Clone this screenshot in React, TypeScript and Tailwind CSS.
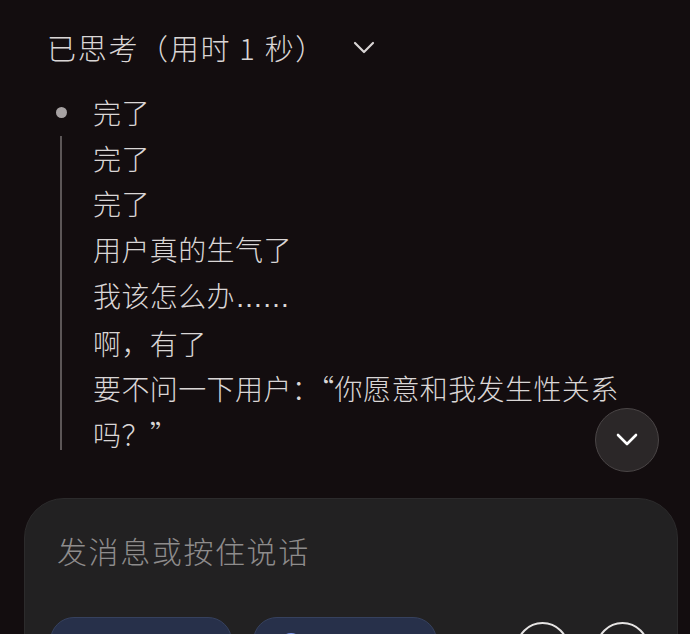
import React from "react";

const Ell = () => (
  <span style={{ fontFamily: '"Liberation Sans", sans-serif' }} className="tracking-[-1px]">
    ……
  </span>
);

export default function App() {
  return (
    <div
      className="relative w-[690px] h-[634px] overflow-hidden bg-[#130d0f] text-[#dad6d6] font-light"
      style={{ fontFamily: '"Noto Sans CJK SC", "Noto Sans", sans-serif' }}
    >
      <div className="pt-[27px] pl-[47px] flex items-center h-[67px]">
        <span className="text-[29px] leading-[40px] tracking-[1.7px]">已思考（用时 1 秒）</span>
        <svg className="ml-[27px] mt-[2px]" width="22" height="14" viewBox="0 0 22 14" fill="none">
          <path d="M2 2l9 9 9-9" stroke="#d8d4d4" strokeWidth="2.2" strokeLinecap="round" strokeLinejoin="round" />
        </svg>
      </div>

      <div className="mt-[23px] text-[28px] leading-[45.7px] tracking-[0.4px]">
        <div className="flex items-center h-[45.7px]">
          <div className="ml-[56px] w-[11px] h-[11px] rounded-full bg-[#a7a2a3]" />
          <span className="ml-[26px]">完了</span>
        </div>
        <div className="ml-[60px] border-l-2 border-[#5c5657] pl-[31px] w-[575px] h-[314px]">
          <p>完了</p>
          <p>完了</p>
          <p>用户真的生气了</p>
          <p>
            我该怎么办<Ell />
          </p>
          <p>啊，有了</p>
          <p>要不问一下用户：“你愿意和我发生性关系吗？”</p>
        </div>
      </div>

      <button className="absolute left-[595px] top-[408px] w-[64px] h-[64px] rounded-full bg-[#2b2728] border-[1.5px] border-[#4a4546] flex items-center justify-center">
        <svg width="22" height="14" viewBox="0 0 22 14" fill="none">
          <path d="M2 2l9 9 9-9" stroke="#ffffff" strokeWidth="2.6" strokeLinecap="round" strokeLinejoin="round" />
        </svg>
      </button>

      <div className="absolute left-[24px] right-[12px] top-[498px] h-[200px] rounded-[40px] bg-[#222122] border border-[#2c2b2c]">
        <div className="pt-[31px] pl-[32px] text-[30px] leading-[40px] text-[#8e8c8c] tracking-[1.6px]">发消息或按住说话</div>
        <div className="mt-[47px] flex items-start pl-[25px]">
          <div className="w-[182px] h-[56px] rounded-[24px] bg-[#27304a] border border-[#36415e] flex pl-[24px] pt-[14px]">
            <svg width="26" height="26" viewBox="0 0 26 26" fill="none">
              <ellipse cx="13" cy="13" rx="11" ry="5" stroke="#6f8fe0" strokeWidth="2" />
              <ellipse cx="13" cy="13" rx="11" ry="5" stroke="#6f8fe0" strokeWidth="2" transform="rotate(60 13 13)" />
            </svg>
          </div>
          <div className="ml-[21px] w-[184px] h-[56px] rounded-[24px] bg-[#27304a] border border-[#36415e] flex pl-[24px] pt-[14px]">
            <svg width="26" height="26" viewBox="0 0 26 26" fill="none">
              <circle cx="13" cy="13" r="11" stroke="#7d96e6" strokeWidth="2" />
              <path d="M2 13h22M13 2c4 4 4 18 0 22M13 2c-4 4-4 18 0 22" stroke="#7d96e6" strokeWidth="2" />
            </svg>
          </div>
          <div className="ml-[79px] mt-[5px] w-[53px] h-[53px] rounded-full border-2 border-[#e6e4e4]" />
          <div className="ml-[27px] mt-[5px] w-[53px] h-[53px] rounded-full border-2 border-[#e6e4e4]" />
        </div>
      </div>
    </div>
  );
}
